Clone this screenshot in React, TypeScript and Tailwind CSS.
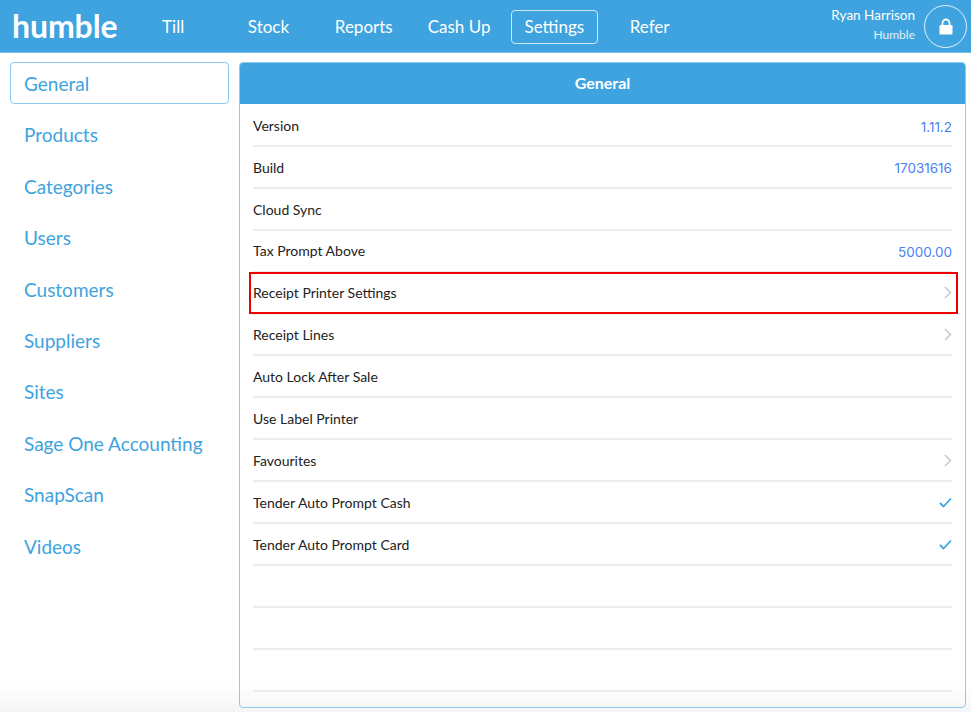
const navItems = ['Till', 'Stock', 'Reports', 'Cash Up', 'Settings', 'Refer'];

const sideItems = [
  'General',
  'Products',
  'Categories',
  'Users',
  'Customers',
  'Suppliers',
  'Sites',
  'Sage One Accounting',
  'SnapScan',
  'Videos',
];

type Row = { label: string; value?: string; chevron?: boolean; check?: boolean; marked?: boolean };

const rows: Row[] = [
  { label: 'Version', value: '1.11.2' },
  { label: 'Build', value: '17031616' },
  { label: 'Cloud Sync' },
  { label: 'Tax Prompt Above', value: '5000.00' },
  { label: 'Receipt Printer Settings', chevron: true, marked: true },
  { label: 'Receipt Lines', chevron: true },
  { label: 'Auto Lock After Sale' },
  { label: 'Use Label Printer' },
  { label: 'Favourites', chevron: true },
  { label: 'Tender Auto Prompt Cash', check: true },
  { label: 'Tender Auto Prompt Card', check: true },
  { label: '' },
  { label: '' },
  { label: '' },
];

function Chevron() {
  return (
    <svg width="8" height="13" viewBox="0 0 8 13" fill="none">
      <path d="M1 1l5.5 5.5L1 12" stroke="#c7c7cc" strokeWidth="1.5" />
    </svg>
  );
}

function Check() {
  return (
    <svg width="13" height="11" viewBox="0 0 13 11" fill="none">
      <path d="M1 6l3.5 3.5L12 1.5" stroke="#3ea3de" strokeWidth="1.8" />
    </svg>
  );
}

function LockIcon() {
  return (
    <svg width="14" height="17" viewBox="0 0 14 17" fill="none">
      <path d="M3.5 8V5a3.5 3.5 0 0 1 7 0v3" stroke="white" strokeWidth="1.8" />
      <rect x="0.5" y="7" width="13" height="9.5" rx="1.2" fill="white" />
    </svg>
  );
}

export default function App() {
  return (
    <div className="h-[712px] w-[971px] overflow-hidden bg-gradient-to-b from-white from-[96%] to-[#f5f5f5] font-['Lato','Liberation_Sans',sans-serif]">
      {/* Top bar */}
      <header className="flex h-[53px] items-center border-b border-[#7cc0e9] bg-[#3ea3de] text-white">
        <div className="w-[125.5px] pl-[12px] text-[32px] font-bold leading-none tracking-[-0.1px]">humble</div>
        <nav className="mt-[1px] flex items-center">
          {navItems.map((item) => (
            <div key={item} className="flex w-[95.3px] justify-center text-[17px]">
              <span
                className={
                  item === 'Settings'
                    ? 'flex h-[34px] w-[87px] items-center justify-center rounded-[4px] border border-[#cfe8f7] pt-[1px]'
                    : 'flex h-[34px] items-center border border-transparent pt-[1px]'
                }
              >
                {item}
              </span>
            </div>
          ))}
        </nav>
        <div className="ml-auto flex items-center pr-[4px]">
          <div className="mb-[4px] mr-[9px] text-right">
            <div className="text-[13.5px] leading-[18px]">Ryan Harrison</div>
            <div className="mt-[3px] text-[12px] leading-[15px] text-[#e3f2fb]">Humble</div>
          </div>
          <div className="flex h-[43px] w-[43px] items-center justify-center rounded-full border border-[#e3f2fb]">
            <LockIcon />
          </div>
        </div>
      </header>

      <main className="flex pl-[10px] pr-[5px] pt-[9px]">
        {/* Left menu */}
        <aside className="w-[219px] shrink-0">
          {sideItems.map((item) => (
            <div
              key={item}
              className={
                item === 'General'
                  ? 'flex h-[42px] items-center rounded-[4px] border border-[#8ecaee] pl-[13px] pt-[2px] text-[19px] text-[#3ea3de]'
                  : 'mt-[9.45px] flex h-[42px] items-center pl-[14px] pt-[2px] text-[19px] text-[#3ea3de]'
              }
            >
              {item}
            </div>
          ))}
        </aside>

        {/* Settings panel */}
        <section className="ml-[10px] h-[646px] flex-1 overflow-hidden rounded-[4px] border border-[#8ecaee]">
          <div className="-mx-[1px] -mt-[1px] flex h-[42px] items-center justify-center bg-[#3ea3de] text-[16px] font-bold text-white">
            General
          </div>
          <div className="pl-[13px] pr-[13px] pt-[1px]">
            {rows.map((row, i) => (
              <div
                key={i}
                className="relative flex h-[41.92px] items-center justify-between border-b-2 border-[#ececec] pt-[0.5px] text-[14px] text-[#222222]"
              >
                <span>{row.label}</span>
                {row.value && (
                  <span className="mt-[3px] font-['Inter',sans-serif] text-[13.5px] text-[#4a82f2]">{row.value}</span>
                )}
                {row.chevron && <Chevron />}
                {row.check && <Check />}
                {row.marked && (
                  <div className="absolute -left-[4px] -right-[6px] -top-[1px] bottom-[-1px] border-2 border-[#ee0000]" />
                )}
              </div>
            ))}
          </div>
        </section>
      </main>
    </div>
  );
}
